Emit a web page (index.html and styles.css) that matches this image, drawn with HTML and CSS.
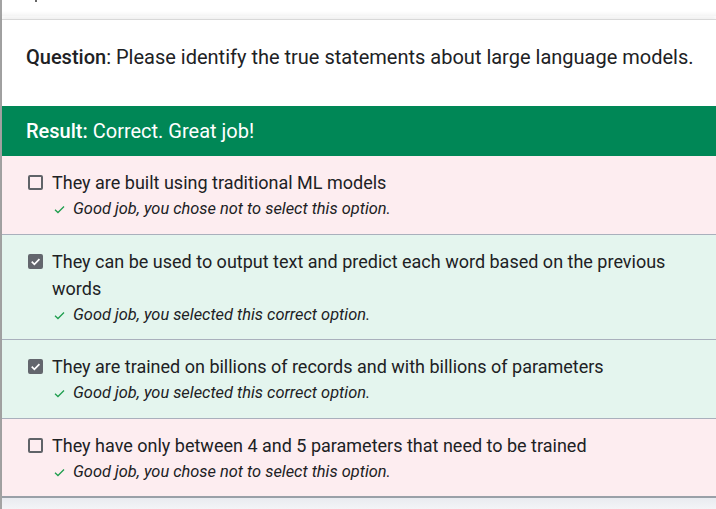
FILE: index.html
```html
<!DOCTYPE html>
<html>
<head>
<meta charset="utf-8">
<link rel="stylesheet" href="styles.css">
</head>
<body>
<div class="page">
  <div class="topgap"><span class="stub"></span></div>
  <div class="card">
    <div class="question"><b>Question</b>: Please identify the true statements about large language models.</div>
    <div class="result"><b>Result:</b> Correct. Great job!</div>
    <div class="option wrong">
      <span class="box"></span>
      <div class="body">
        <div class="label">They are built using traditional ML models</div>
        <div class="feedback"><svg class="tick" viewBox="0 0 12 10"><path d="M1 5.2 L4.3 8.4 L11 1.6" fill="none" stroke="#1e9e4e" stroke-width="1.4"/></svg>Good job, you chose not to select this option.</div>
      </div>
    </div>
    <div class="option right double">
      <span class="box checked"><svg viewBox="0 0 16 16"><path d="M4 8.2 L6.8 11 L12.2 5.4" fill="none" stroke="#fff" stroke-width="1.8"/></svg></span>
      <div class="body">
        <div class="label">They can be used to output text and predict each word based on the previous words</div>
        <div class="feedback"><svg class="tick" viewBox="0 0 12 10"><path d="M1 5.2 L4.3 8.4 L11 1.6" fill="none" stroke="#1e9e4e" stroke-width="1.4"/></svg>Good job, you selected this correct option.</div>
      </div>
    </div>
    <div class="option right">
      <span class="box checked"><svg viewBox="0 0 16 16"><path d="M4 8.2 L6.8 11 L12.2 5.4" fill="none" stroke="#fff" stroke-width="1.8"/></svg></span>
      <div class="body">
        <div class="label">They are trained on billions of records and with billions of parameters</div>
        <div class="feedback"><svg class="tick" viewBox="0 0 12 10"><path d="M1 5.2 L4.3 8.4 L11 1.6" fill="none" stroke="#1e9e4e" stroke-width="1.4"/></svg>Good job, you selected this correct option.</div>
      </div>
    </div>
    <div class="option wrong last">
      <span class="box"></span>
      <div class="body">
        <div class="label">They have only between 4 and 5 parameters that need to be trained</div>
        <div class="feedback"><svg class="tick" viewBox="0 0 12 10"><path d="M1 5.2 L4.3 8.4 L11 1.6" fill="none" stroke="#1e9e4e" stroke-width="1.4"/></svg>Good job, you chose not to select this option.</div>
      </div>
    </div>
  </div>
  <div class="bottom"></div>
</div>
</body>
</html>
```
FILE: styles.css
```css
html, body {
  margin: 0;
  padding: 0;
  background: #fff;
}
body {
  font-family: Roboto, "Liberation Sans", Arial, sans-serif;
  color: #202124;
  width: 716px;
  height: 509px;
  overflow: hidden;
}
.page {
  border-left: 2px solid #a3a3a3;
  height: 509px;
  box-sizing: border-box;
}
.topgap {
  height: 16px;
  position: relative;
  background: linear-gradient(#fff 0, #fff 70%, #f4f4f4 100%);
}
.stub {
  position: absolute;
  left: 33px;
  top: 0;
  width: 2px;
  height: 2px;
  background: #666;
}
.card {
  border-top: 1px solid #d8d8d8;
  box-shadow: 0 -3px 4px rgba(0, 0, 0, 0.06);
  background: #fff;
  margin-top: 3px;
}
.question {
  height: 86px;
  box-sizing: border-box;
  padding: 24px 0 0 24px;
  font-size: 20px;
  line-height: 26px;
  white-space: nowrap;
}
.question b {
  font-weight: 500;
}
.result {
  height: 50px;
  background: #008756;
  color: #fff;
  font-size: 20px;
  line-height: 50px;
  padding-left: 24px;
}
.result b {
  font-weight: 500;
}
.option {
  display: flex;
  align-items: flex-start;
  padding: 13px 24px 14px 26px;
  border-bottom: 1px solid #a9b0bc;
}
.option.double {
  padding-bottom: 13px;
}
.option.last {
  padding-bottom: 13px;
  border-bottom: 2px solid #9aa0a8;
}
.wrong {
  background: #fdedf0;
}
.right {
  background: #e4f5ee;
}
.box {
  flex: none;
  width: 15px;
  height: 15px;
  box-sizing: border-box;
  border: 2px solid #5f6368;
  border-radius: 2px;
  margin-top: 6px;
  margin-right: 9px;
  display: flex;
  align-items: center;
  justify-content: center;
}
.box.checked {
  background: #63666d;
  border-color: #63666d;
}
.box svg {
  width: 15px;
  height: 15px;
  flex: none;
}
.label {
  font-size: 18px;
  line-height: 27px;
}
.feedback {
  font-size: 16.4px;
  font-style: italic;
  line-height: 22px;
  margin-top: 2px;
  display: flex;
  align-items: center;
}
.tick {
  width: 11px;
  height: 9px;
  margin-left: 2px;
  margin-right: 8px;
  flex: none;
}
.bottom {
  height: 20px;
  background: linear-gradient(#e9ebf0, #fbfbfc);
}
```
